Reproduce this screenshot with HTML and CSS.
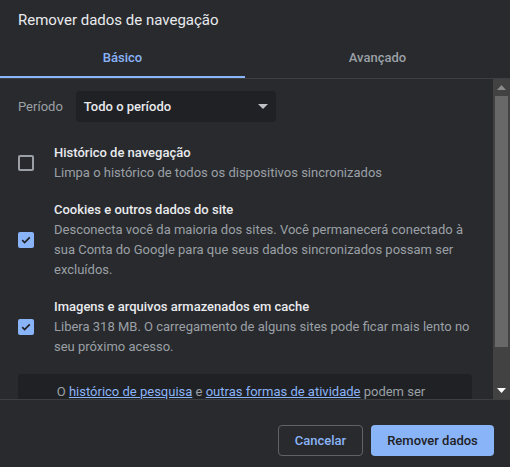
FILE: index.html
```html
<!DOCTYPE html>
<html lang="pt-BR">
<head>
<meta charset="utf-8">
<title>Remover dados de navegação</title>
<link rel="stylesheet" href="styles.css">
</head>
<body>
<div class="dialog">
  <div class="title">Remover dados de navegação</div>
  <div class="tabs">
    <div class="tab active">Básico</div>
    <div class="tab">Avançado</div>
  </div>
  <div class="body">
    <div class="scroll">
      <div class="period">
        <span class="period-label">Período</span>
        <div class="select">
          <span>Todo o período</span>
          <svg class="caret" width="10" height="5" viewBox="0 0 10 5"><path d="M0 0h10L5 5z" fill="#bdc1c6"/></svg>
        </div>
      </div>
      <div class="row">
        <div class="cb"></div>
        <div class="text">
          <div class="label">Histórico de navegação</div>
          <div class="sub">Limpa o histórico de todos os dispositivos sincronizados</div>
        </div>
      </div>
      <div class="row">
        <div class="cb checked"><svg width="12" height="12" viewBox="0 0 12 12"><path d="M2.2 6.2l2.4 2.4 5.2-5.2" fill="none" stroke="#202124" stroke-width="1.7"/></svg></div>
        <div class="text">
          <div class="label">Cookies e outros dados do site</div>
          <div class="sub">Desconecta você da maioria dos sites. Você permanecerá conectado à sua Conta do Google para que seus dados sincronizados possam ser excluídos.</div>
        </div>
      </div>
      <div class="row">
        <div class="cb checked"><svg width="12" height="12" viewBox="0 0 12 12"><path d="M2.2 6.2l2.4 2.4 5.2-5.2" fill="none" stroke="#202124" stroke-width="1.7"/></svg></div>
        <div class="text">
          <div class="label">Imagens e arquivos armazenados em cache</div>
          <div class="sub">Libera 318 MB. O carregamento de alguns sites pode ficar mais lento no seu próximo acesso.</div>
        </div>
      </div>
      <div class="notice">O <a href="#">histórico de pesquisa</a> e <a href="#">outras formas de atividade</a> podem ser salvos na sua Conta do Google quando você estiver conectado. É possível excluí-los a qualquer momento.</div>
    </div>
    <div class="scrollbar">
      <div class="sb-btn"><svg width="9" height="5" viewBox="0 0 9 5"><path d="M0 5L4.5 0 9 5z" fill="#8a8a8a"/></svg></div>
      <div class="sb-track"><div class="sb-thumb"></div></div>
      <div class="sb-btn"><svg width="9" height="5" viewBox="0 0 9 5"><path d="M0 0h9L4.5 5z" fill="#ffffff"/></svg></div>
    </div>
  </div>
  <div class="footer">
    <button class="btn cancel">Cancelar</button>
    <button class="btn primary">Remover dados</button>
  </div>
</div>
</body>
</html>
```

FILE: styles.css
```css
* { box-sizing: border-box; }
html, body {
  margin: 0;
  padding: 0;
  background: #292a2d;
  font-family: Roboto, "Liberation Sans", sans-serif;
  color: #e8eaed;
}
.dialog {
  width: 510px;
  height: 467px;
  display: flex;
  flex-direction: column;
}
.title {
  font-size: 15px;
  line-height: 20px;
  padding: 10px 18px 8px;
  color: #e8eaed;
}
.tabs {
  display: flex;
  border-bottom: 1px solid #3c4043;
}
.tab {
  flex: 1;
  text-align: center;
  font-size: 13px;
  font-weight: 500;
  height: 40px;
  padding-top: 1px;
  line-height: 37px;
  color: #9aa0a6;
  border-bottom: 2px solid transparent;
}
.tab.active {
  flex: none;
  width: 245px;
  color: #8ab4f8;
  border-bottom-color: #8ab4f8;
}
.body {
  height: 321px;
  display: flex;
  border-bottom: 1px solid #3c4043;
  overflow: hidden;
}
.scroll {
  flex: 1;
  padding: 12px 21px 0 18px;
  overflow: hidden;
  font-size: 13px;
}
.period {
  display: flex;
  align-items: center;
  gap: 13px;
  margin-bottom: 21px;
}
.period-label {
  color: #9aa0a6;
}
.select {
  width: 200px;
  height: 31px;
  background: #202124;
  border-radius: 4px;
  display: flex;
  align-items: center;
  justify-content: space-between;
  padding: 0 8px;
  font-weight: 500;
  color: #e8eaed;
}
.row {
  display: flex;
  align-items: center;
  gap: 20px;
  margin-bottom: 17px;
}
.cb {
  flex: none;
  width: 16px;
  height: 16px;
  border: 2px solid #9aa0a6;
  border-radius: 2px;
  display: flex;
  align-items: center;
  justify-content: center;
}
.cb.checked {
  background: #8ab4f8;
  border-color: #8ab4f8;
}
.text { line-height: 20px; }
.label { color: #e8eaed; font-weight: 500; }
.sub { color: #9aa0a6; }
.notice {
  margin-top: 16px;
  background: #202124;
  border-radius: 4px;
  padding: 8px 28px 10px 20px;
  line-height: 20px;
  text-align: center;
  color: #9aa0a6;
}
.notice a { color: #8ab4f8; }
.scrollbar {
  width: 17px;
  flex: none;
  background: #424242;
  display: flex;
  flex-direction: column;
}
.sb-btn {
  height: 17px;
  display: flex;
  align-items: center;
  justify-content: center;
}
.sb-track {
  flex: 1;
  padding: 0 2px;
}
.sb-thumb {
  height: 251px;
  background: #686868;
}
.footer {
  display: flex;
  justify-content: flex-end;
  gap: 8px;
  padding: 25px 16px 0;
}
.btn {
  height: 31px;
  border-radius: 4px;
  font-family: Roboto, "Liberation Sans", sans-serif;
  font-size: 13px;
  font-weight: 500;
  padding: 0 15px;
}
.cancel {
  width: 85px;
  background: transparent;
  border: 1px solid #5f6368;
  color: #8ab4f8;
}
.primary {
  width: 123px;
  background: #8ab4f8;
  border: none;
  color: #202124;
}
```
